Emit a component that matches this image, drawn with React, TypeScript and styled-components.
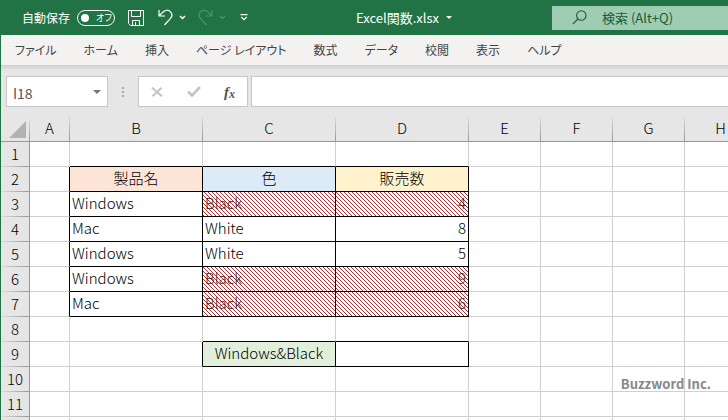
import React from "react";
import styled, { createGlobalStyle, css } from "styled-components";

const uiFont = `"Noto Sans CJK JP", "Noto Sans", sans-serif`;

const GlobalStyle = createGlobalStyle`
  *, *::before, *::after { box-sizing: border-box; }
  html, body { margin: 0; padding: 0; }
  body { font-family: ${uiFont}; background: #fff; overflow: hidden; }
  button, input { font-family: inherit; margin: 0; padding: 0; border: 0; background: none; }
`;

const Window = styled.div`
  position: relative;
  display: flex;
  flex-direction: column;
  height: 100vh;
  overflow: hidden;
`;

const TitleBar = styled.header`
  display: flex;
  align-items: center;
  flex: none;
  height: 35px;
  background: #217346;
  color: #fff;
`;

const QuickAccess = styled.div`
  display: flex;
  align-items: center;
  width: 250px;
  padding-left: 22px;
  flex: none;
`;

const AutoSave = styled.label`
  display: flex;
  align-items: center;
  gap: 7px;
  font-size: 12px;
  line-height: 16px;
  white-space: nowrap;
`;

const SwitchTrack = styled.span`
  display: flex;
  align-items: center;
  gap: 7px;
  width: 38px;
  height: 16px;
  padding: 0 3px;
  border: 1px solid #fff;
  border-radius: 8px;
  font-size: 9px;
  font-feature-settings: "palt";
`;

const SwitchInput = styled.input`
  appearance: none;
  flex: none;
  width: 8px;
  height: 8px;
  border-radius: 50%;
  background: #fff;
`;

const ToolButton = styled.button<{ $space: number; $faded?: boolean }>`
  display: flex;
  align-items: center;
  margin-left: ${(p) => p.$space}px;
  color: ${(p) => (p.$faded ? "#4f9170" : "#fff")};
`;

const DocumentTitle = styled.button`
  display: flex;
  flex: 1;
  align-items: center;
  justify-content: center;
  gap: 7px;
  padding-left: 6px;
  color: #fff;
  font-size: 13px;
  line-height: 18px;
  white-space: nowrap;
`;

const SearchBox = styled.label`
  display: flex;
  align-items: center;
  gap: 15px;
  flex: none;
  width: 176px;
  height: 24px;
  padding-left: 20px;
  background: #9fcdb3;
  color: #185c37;
`;

const SearchInput = styled.input`
  flex: 1;
  min-width: 0;
  outline: none;
  font-size: 13px;
  line-height: 18px;
  color: #185c37;
  &::placeholder { color: #185c37; opacity: 1; }
`;

const Body = styled.main`
  display: flex;
  flex: 1;
  flex-direction: column;
  min-height: 0;
  border-left: 1px solid #217346;
  background: #e6e6e6;
`;

const RibbonTabs = styled.nav`
  display: flex;
  align-items: center;
  gap: 27px;
  flex: none;
  height: 30px;
  padding-left: 14px;
  background: #f3f2f1;
`;

const Tab = styled.button`
  font-size: 12px;
  line-height: 20px;
  color: #444;
  white-space: nowrap;
  font-feature-settings: "palt";
`;

const RibbonShadow = styled.div`
  flex: none;
  height: 5px;
  background: linear-gradient(#cfcecd, #e6e6e6);
`;

const FormulaBar = styled.div`
  display: flex;
  align-items: center;
  flex: none;
  padding: 6px 0 10px 5px;
`;

const barBox = css`
  display: flex;
  align-items: center;
  height: 31px;
  border: 1px solid #c6c6c6;
  background: #fff;
`;

const NameBox = styled.div`
  ${barBox}
  flex: none;
  width: 102px;
  padding: 0 6px;
`;

const NameInput = styled.input`
  flex: 1;
  min-width: 0;
  padding-top: 3px;
  font-size: 14px;
  line-height: 20px;
  color: #555;
  outline: none;
`;

const IconButton = styled.button<{ $dark?: boolean }>`
  display: flex;
  align-items: center;
  justify-content: center;
  color: ${(p) => (p.$dark ? "#777" : "#c4c4c4")};
`;

const Grip = styled.div`
  display: flex;
  flex-direction: column;
  align-items: center;
  gap: 2px;
  flex: none;
  width: 30px;
`;

const GripDot = styled.span`
  width: 2px;
  height: 2px;
  background: #a8a8a8;
`;

const FormulaActions = styled.div`
  ${barBox}
  flex: none;
  width: 110px;
  padding: 0 12px;
  justify-content: space-between;
`;

const FunctionButton = styled.button`
  color: #555;
  font: italic bold 15px/18px "Liberation Serif", serif;
  sub { font-size: 12px; line-height: 10px; vertical-align: -1px; }
`;

const FormulaInput = styled.input`
  ${barBox}
  flex: 1;
  min-width: 0;
  margin-left: 3px;
  padding: 0 6px;
  border: 1px solid #c6c6c6;
  border-right: 0;
  background: #fff;
  font-size: 14px;
  outline: none;
`;

const SheetArea = styled.div`
  flex: 1;
  min-height: 0;
  overflow: hidden;
  background: #fff;
`;

const Sheet = styled.table`
  width: 756px;
  table-layout: fixed;
  border-collapse: separate;
  border-spacing: 0;
  font-size: 15px;
  font-weight: 300;
  line-height: 22px;
  color: #000;
`;

const Col = styled.col<{ $width: number }>`
  width: ${(p) => p.$width}px;
`;

const Corner = styled.td`
  height: 25px;
  padding: 0 3px 0 8px;
  border-bottom: 1px solid #999;
  background: linear-gradient(#e6e6e6, #999) right / 1px 100% no-repeat #e6e6e6;
  svg { display: block; }
`;

const ColumnHeader = styled.th`
  height: 25px;
  padding: 0 1px 2px 0;
  border-bottom: 1px solid #999;
  background: linear-gradient(#dadada, #999) right / 1px 100% no-repeat #e6e6e6;
  font-weight: 300;
  text-align: center;
`;

const RowHeader = styled.th`
  height: 25px;
  padding: 0 0 2px;
  border-right: 1px solid #999;
  background: linear-gradient(to right, #dadada, #999) bottom / 100% 1px no-repeat #e6e6e6;
  font-weight: 300;
  text-align: center;
`;

const hatchTile = encodeURIComponent(
  `<svg xmlns="http://www.w3.org/2000/svg" width="4" height="4" shape-rendering="crispEdges"><path fill="#a83236" d="M0 0h1v1H0zM1 1h1v1H1zM2 2h1v1H2zM3 3h1v1H3z"/></svg>`
);

/* Fixed attachment keeps the diagonal lines continuous across neighbouring cells. */
const hatch = css`
  background-image: url("data:image/svg+xml,${hatchTile}");
  background-size: 4px 4px;
  background-attachment: fixed;
  color: #3b1c20;
`;

type CellStyle = {
  $fill?: string;
  $hatched?: boolean;
  $align?: "left" | "center" | "right";
  $blackRight: boolean;
  $blackBottom: boolean;
};

const Cell = styled.td<CellStyle>`
  height: 25px;
  padding: 0 2px 2px;
  border-right: 1px solid ${(p) => (p.$blackRight ? "#000" : "#d0d0d0")};
  border-bottom: 1px solid ${(p) => (p.$blackBottom ? "#000" : "#d0d0d0")};
  background-color: ${(p) => p.$fill ?? "#fff"};
  text-align: ${(p) => p.$align ?? "left"};
  white-space: nowrap;
  ${(p) => p.$hatched && hatch}
`;

const Credit = styled.div`
  position: absolute;
  right: 17px;
  bottom: 26px;
  font: bold 13px/20px "Noto Sans CJK JP", sans-serif;
  color: #888;
`;

const Chevron = () => (
  <svg width="7" height="5" viewBox="0 0 7 5" fill="none" stroke="currentColor" strokeWidth="1.5">
    <path d="M1 1l2.5 2.5L6 1" />
  </svg>
);

const SaveIcon = () => (
  <svg width="16" height="16" viewBox="0 0 16 16" fill="none" stroke="currentColor">
    <path d="M.5.5h15v15H2.5l-2-2zM3.5.5v6h9v-6M4.5 15.5v-5h7v5M7.5 15v-3" />
  </svg>
);

const UndoIcon = () => (
  <svg width="15" height="17" viewBox="0 0 15 17" fill="none" stroke="currentColor" strokeWidth="1.2">
    <path d="M1 1v6h6M1 7l4-4c2.500-2.400 5.500-2.200 7.300-.4 2 2 2 4.900 0 7L6.500 16" />
  </svg>
);

const RedoIcon = () => (
  <svg width="15" height="17" viewBox="0 0 15 17" fill="none" stroke="currentColor" strokeWidth="1.2">
    <path d="M14 1v6H8M14 7l-4-4C7.500.6 4.500.8 2.700 2.600c-2 2-2 4.900 0 7L8.500 16" />
  </svg>
);

const CustomizeIcon = () => (
  <svg width="8" height="7" viewBox="0 0 8 7" fill="none" stroke="currentColor" strokeWidth="1.200">
    <path d="M.5 .6h7M1.300 3l2.700 2.600L6.700 3" />
  </svg>
);

const SolidCaret = ({ size = 6 }: { size?: number }) => (
  <svg width={size} height={size / 2} viewBox="0 0 8 4" fill="currentColor">
    <path d="M0 0h8L4 4z" />
  </svg>
);

const SearchIcon = () => (
  <svg width="15" height="15" viewBox="0 0 15 15" fill="none" stroke="currentColor" strokeWidth="1.1">
    <circle cx="9.300" cy="5.500" r="4.700" />
    <path d="M6 9L.8 14.200" />
  </svg>
);

const CancelIcon = () => (
  <svg width="12" height="10" viewBox="0 0 12 10" fill="none" stroke="currentColor" strokeWidth="2">
    <path d="M1 .7l10 8.600M10.500 .7L1.500 9.300" />
  </svg>
);

const EnterIcon = () => (
  <svg width="14" height="11" viewBox="0 0 14 11" fill="none" stroke="currentColor" strokeWidth="2.600">
    <path d="M1 5.500l4 4L13 1" />
  </svg>
);

const tabs = ["ファイル", "ホーム", "挿入", "ページ レイアウト", "数式", "データ", "校閲", "表示", "ヘルプ"];
const columns = ["A", "B", "C", "D", "E", "F", "G", "H"];
const columnWidths = [40, 133, 133, 133, 72, 72, 72, 72];
const rows = Array.from({ length: 11 }, (_, i) => i + 1);

type CellData = { text: string; fill?: string; hatched?: boolean; align?: "left" | "center" | "right" };

const cells: Record<string, CellData> = {
  B2: { text: "製品名", fill: "#fce4d6", align: "center" },
  C2: { text: "色", fill: "#ddebf7", align: "center" },
  D2: { text: "販売数", fill: "#fff2cc", align: "center" },
  C9: { text: "Windows&Black", fill: "#e2efda", align: "center" },
  D9: { text: "" },
};

const sales: [string, string, number][] = [
  ["Windows", "Black", 4],
  ["Mac", "White", 8],
  ["Windows", "White", 5],
  ["Windows", "Black", 9],
  ["Mac", "Black", 6],
];

sales.forEach(([product, color, count], i) => {
  const hatched = color === "Black";
  cells[`B${i + 3}`] = { text: product };
  cells[`C${i + 3}`] = { text: color, hatched };
  cells[`D${i + 3}`] = { text: String(count), hatched, align: "right" };
});

const isBordered = (col: number, row: number) => `${columns[col]}${row}` in cells;

export default function App() {
  return (
    <>
      <GlobalStyle />
      <Window>
        <TitleBar>
          <QuickAccess>
            <AutoSave>
              自動保存
              <SwitchTrack>
                <SwitchInput type="checkbox" role="switch" />
                オフ
              </SwitchTrack>
            </AutoSave>
            <ToolButton $space={13} aria-label="上書き保存"><SaveIcon /></ToolButton>
            <ToolButton $space={14} aria-label="元に戻す"><UndoIcon /></ToolButton>
            <ToolButton $space={6} aria-label="元に戻す履歴"><Chevron /></ToolButton>
            <ToolButton $space={12} $faded aria-label="やり直し"><RedoIcon /></ToolButton>
            <ToolButton $space={6} $faded aria-label="やり直し履歴"><Chevron /></ToolButton>
            <ToolButton $space={14} aria-label="カスタマイズ"><CustomizeIcon /></ToolButton>
          </QuickAccess>
          <DocumentTitle>
            Excel関数.xlsx
            <SolidCaret />
          </DocumentTitle>
          <SearchBox>
            <SearchIcon />
            <SearchInput type="search" aria-label="検索" placeholder="検索 (Alt+Q)" />
          </SearchBox>
        </TitleBar>
        <Body>
          <RibbonTabs>
            {tabs.map((name) => <Tab key={name}>{name}</Tab>)}
          </RibbonTabs>
          <RibbonShadow />
          <FormulaBar>
            <NameBox>
              <NameInput aria-label="名前ボックス" defaultValue="I18" />
              <IconButton $dark aria-label="名前の一覧"><SolidCaret size={8} /></IconButton>
            </NameBox>
            <Grip>
              <GripDot /><GripDot /><GripDot />
            </Grip>
            <FormulaActions>
              <IconButton aria-label="キャンセル"><CancelIcon /></IconButton>
              <IconButton aria-label="入力"><EnterIcon /></IconButton>
              <FunctionButton aria-label="関数の挿入">f<sub>x</sub></FunctionButton>
            </FormulaActions>
            <FormulaInput aria-label="数式バー" />
          </FormulaBar>
          <SheetArea>
            <Sheet>
              <colgroup>
                <Col $width={29} />
                {columns.map((c, i) => <Col key={c} $width={columnWidths[i]} />)}
              </colgroup>
              <thead>
                <tr>
                  <Corner>
                    <svg width="17" height="17" viewBox="0 0 17 17" fill="#b2b2b2"><path d="M17 0v17H0z" /></svg>
                  </Corner>
                  {columns.map((c) => <ColumnHeader key={c} scope="col">{c}</ColumnHeader>)}
                </tr>
              </thead>
              <tbody>
                {rows.map((row) => (
                  <tr key={row}>
                    <RowHeader scope="row">{row}</RowHeader>
                    {columns.map((name, col) => {
                      const data = cells[`${name}${row}`];
                      const own = isBordered(col, row);
                      return (
                        <Cell
                          key={name}
                          $fill={data?.fill}
                          $hatched={data?.hatched}
                          $align={data?.align}
                          $blackRight={own || isBordered(col + 1, row)}
                          $blackBottom={own || isBordered(col, row + 1)}
                        >
                          {data?.text}
                        </Cell>
                      );
                    })}
                  </tr>
                ))}
                <tr>
                  <RowHeader />
                  {columns.map((name) => <Cell key={name} $blackRight={false} $blackBottom={false} />)}
                </tr>
              </tbody>
            </Sheet>
          </SheetArea>
        </Body>
        <Credit>Buzzword Inc.</Credit>
      </Window>
    </>
  );
}
